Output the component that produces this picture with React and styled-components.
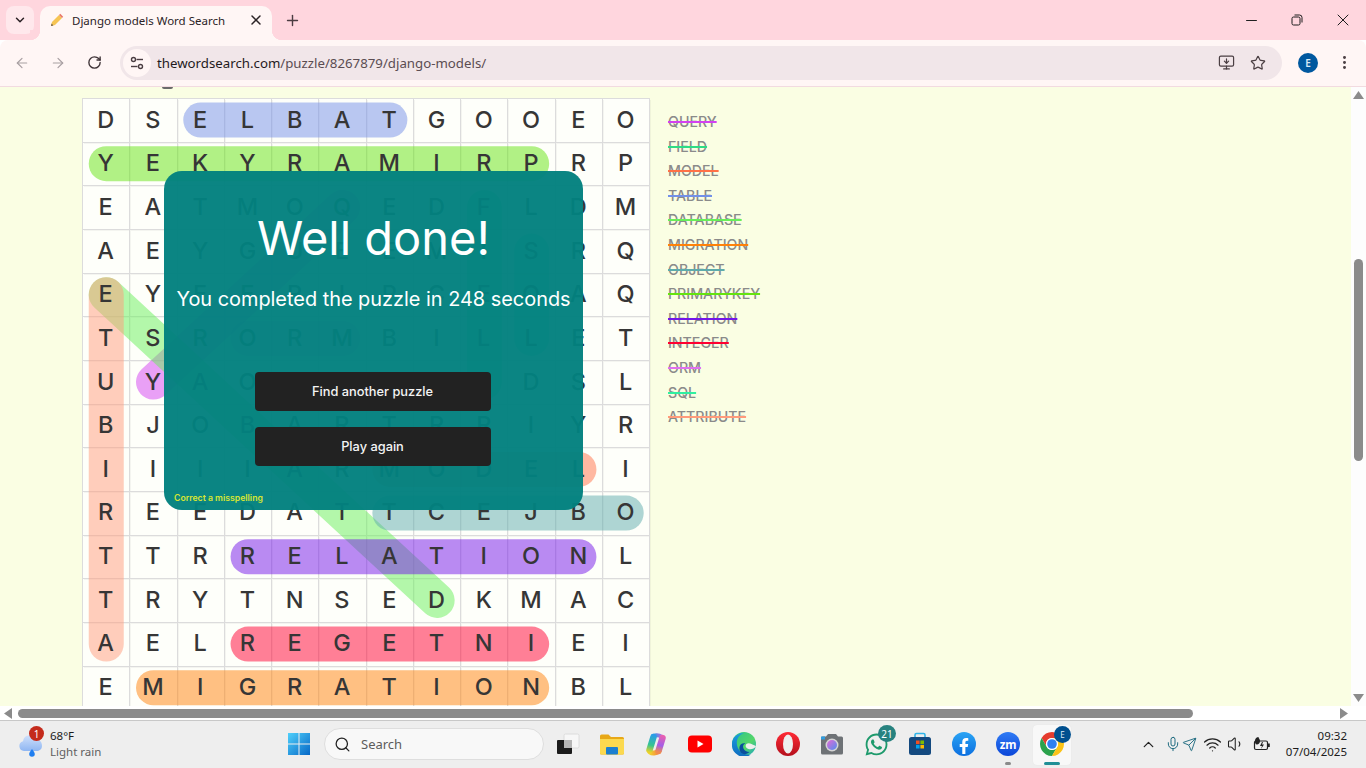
import React from 'react';
import styled, { createGlobalStyle } from 'styled-components';
import { ChevronDown, X, Plus, ArrowLeft, ArrowRight, RotateCw, MonitorDown, Star, EllipsisVertical, Minus, Search, ChevronUp, Mic, Send, Wifi, Volume1 } from 'lucide-react';
import { FaWhatsapp, FaFacebookF } from 'react-icons/fa';

const Global = createGlobalStyle`
  html, body { margin: 0; padding: 0; width: 1366px; height: 768px; overflow: hidden; background: #fff; }
  * { box-sizing: border-box; }
`;

const Screen = styled.div`
  width: 1366px; height: 768px; display: flex; flex-direction: column; overflow: hidden;
  font-family: "Noto Sans", "Open Sans", sans-serif;
`;

/* ---------- browser chrome ---------- */
const TabStrip = styled.div`
  height: 40px; background: #ffd6de; display: flex; align-items: flex-end; padding-left: 6px; flex: none;
`;
const TabListButton = styled.div`
  width: 28px; height: 28px; margin-bottom: 6px; border-radius: 8px; background: #ffe8ec;
  display: flex; align-items: center; justify-content: center; color: #2a2024;
`;
const Tab = styled.div`
  position: relative; width: 232px; height: 34px; margin-left: 6px; padding: 0 8px 6px 10px;
  background: #fff6f5; border-radius: 10px 10px 0 0; display: flex; align-items: center;
  color: #2b2326; font-size: 11.5px;
  &::before, &::after { content: ""; position: absolute; bottom: 0; width: 10px; height: 10px; }
  &::before { left: -10px; background: radial-gradient(circle at 0 0, #ffd6de 10px, #fff6f5 10.5px); }
  &::after { right: -10px; background: radial-gradient(circle at 100% 0, #ffd6de 10px, #fff6f5 10.5px); }
`;
const TabTitle = styled.span` margin-left: 8px; flex: 1; white-space: nowrap; `;
const NewTab = styled.div`
  margin: 0 0 9px 9px; width: 22px; height: 22px; display: flex; align-items: center; justify-content: center; color: #4b3d42;
`;
const WindowControls = styled.div`
  margin-left: auto; align-self: stretch; display: flex; align-items: center;
`;
const WindowButton = styled.div`
  width: 46px; height: 40px; display: flex; align-items: center; justify-content: center; color: #1d1d1d;
`;
const Toolbar = styled.div`
  height: 47px; flex: none; background: #fff6f5; border-bottom: 1px solid #f2dbe0; display: flex; align-items: center;
  padding: 0 0 1px 0; border-radius: 8px 8px 0 0; margin-top: 0;
`;
const NavGroup = styled.div` display: flex; align-items: center; padding-left: 4px; width: 120px; `;
const NavButton = styled.div`
  width: 36px; height: 36px; display: flex; align-items: center; justify-content: center;
  color: ${p => p.$dim ? '#a89fa2' : '#3f3438'};
`;
const Omnibox = styled.div`
  width: 1162px; height: 34px; border-radius: 17px; background: #f1e6e9; display: flex; align-items: center; padding: 0 8px 0 3px;
`;
const SiteInfo = styled.div`
  width: 28px; height: 28px; border-radius: 50%; background: #fff6f5; display: flex; align-items: center; justify-content: center;
`;
const Url = styled.div`
  margin-left: 6px; font-size: 13.25px; color: #1f1a1c; flex: 1; white-space: nowrap;
  span { color: #5b4d52; }
`;
const OmniIcon = styled.div`
  width: 32px; height: 32px; display: flex; align-items: center; justify-content: center; color: #4b3f43;
`;
const Avatar = styled.div`
  margin-left: 16px; width: 20px; height: 20px; border-radius: 50%; background: #00589f; color: #d9e9f7;
  display: flex; align-items: center; justify-content: center; font-size: 10px; font-weight: 600;
`;
const Kebab = styled.div`
  margin-left: 14px; width: 24px; display: flex; justify-content: center; color: #4b3f43;
`;

/* ---------- page ---------- */
const Viewport = styled.div` flex: none; height: 619px; display: flex; `;
const Page = styled.div`
  position: relative; flex: 1; overflow: hidden; background: #fafee3; display: flex; align-items: flex-start;
  padding: 11px 0 0 82px;
`;
const Descender = styled.i`
  position: absolute; left: 162px; top: 0; width: 11px; height: 2px; background: #6a6a6a; border-radius: 0 0 6px 6px;
`;
const Board = styled.div`
  position: relative; flex: none; width: 568px; height: 613px;
  display: grid; grid-template-columns: repeat(12, 47.27px); grid-auto-rows: 43.67px;
  border-top: 1px solid #dcdcdc; border-left: 1px solid #dcdcdc; background: #fefffa;
`;
const Cell = styled.div`
  border-right: 1px solid #dcdcdc; border-bottom: 1px solid #dcdcdc; box-shadow: 1px 1px 0 rgba(0, 0, 0, 0.04);
  display: flex; align-items: center; justify-content: center; padding: 0 1px 2px 0;
`;
const Letter = styled.span`
  position: relative; z-index: 2; font-family: Inter, "Noto Sans", sans-serif; font-size: 23.5px; font-weight: 550; color: #363636; line-height: 1;
`;
const Highlights = styled.svg`
  position: absolute; left: -1px; top: -1px; z-index: 1; pointer-events: none;
`;
const Modal = styled.div`
  position: absolute; z-index: 3; left: 81px; top: 72px; width: 419px; height: 339px; border-radius: 18px;
  background: rgba(2, 129, 126, 0.965); color: #fff; display: flex; flex-direction: column; align-items: center;
  font-family: Inter, "Noto Sans", sans-serif; padding: 37px 0 0;
`;
const ModalTitle = styled.h1`
  margin: 0; font-size: 47px; line-height: 60px; font-weight: 400; letter-spacing: 0;
`;
const ModalText = styled.p`
  margin: 18px 0 0; font-size: 19.9px; line-height: 26px; font-weight: 400; white-space: nowrap;
`;
const ModalButton = styled.div`
  width: 236px; height: 39px; border-radius: 4px; background: #222; color: #f4f4f4; margin-right: 2px;
  display: flex; align-items: center; justify-content: center; font-size: 12.8px; font-weight: 500;
  margin-top: ${p => p.$first ? '60px' : '16px'}; padding-bottom: 1px;
`;
const Correction = styled.div`
  align-self: flex-start; margin: auto 0 5px 10px; font-size: 8.7px; font-weight: 600; color: #d7e632; line-height: 13px;
`;
const WordList = styled.ul`
  list-style: none; margin: 0 0 0 18px; padding: 12px 0 0; font-family: Inter, "Noto Sans", sans-serif;
`;
const Word = styled.li`
  font-size: 14.2px; line-height: 24.6px; font-weight: 550; color: #8a8a8a;
  text-decoration: line-through 2px ${p => p.$color};
`;
const VScroll = styled.div`
  width: 15px; flex: none; background: #fdfdfd; display: flex; flex-direction: column; align-items: center;
  padding: 4px 0; color: #8b8b8b;
`;
const VThumb = styled.div`
  width: 9px; height: 202px; background: #8b8b8b; border-radius: 5px; margin: 160px 0 auto;
`;
const HScroll = styled.div`
  flex: none; height: 14px; background: #fff; display: flex; align-items: center; padding: 0 18px 0 4px;
`;
const HThumb = styled.div`
  width: 1175px; height: 9px; background: #8b8b8b; border-radius: 5px; margin: 0 auto 0 6px;
`;
const Arrow = styled.svg` flex: none; display: block; `;

/* ---------- taskbar ---------- */
const Taskbar = styled.div`
  flex: none; height: 48px; background: #eeeeee; border-top: 1px solid #c8c8c8; display: flex; align-items: center;
  position: relative; padding-bottom: 1px;
`;
const Weather = styled.div`
  width: 277px; padding-left: 18px; display: flex; align-items: center; flex: none;
`;
const WeatherIcon = styled.div` position: relative; width: 32px; height: 32px; `;
const RedBadge = styled.div`
  position: absolute; left: 11px; top: -2px; width: 15px; height: 15px; border-radius: 50%; background: #c42b1c; color: #fff;
  font-size: 10px; display: flex; align-items: center; justify-content: center;
`;
const WeatherText = styled.div`
  font-size: 11.5px; line-height: 16px; color: #1c1c1c; span { display: block; color: #5f5f5f; }
`;
const Slot = styled.div`
  position: relative; width: 44px; height: 40px; flex: none; display: flex; align-items: center; justify-content: center;
`;
const ActiveSlot = styled(Slot)`
  &::before { content: ""; position: absolute; left: 3px; right: 3px; top: 1px; bottom: -1px; background: #f8f8f8; border-radius: 4px; box-shadow: 0 0 1px #ddd; }
  svg { position: relative; }
`;
const SearchBox = styled.div`
  flex: none; width: 220px; height: 32px; margin: 0 2px 0 3px; border-radius: 16px; background: #f8f8f8; border: 1px solid #dedede;
  display: flex; align-items: center; padding-left: 9px; font-size: 13px; color: #5c5c5c; gap: 10px;
`;
const CountBadge = styled.div`
  position: absolute; left: 24px; top: 1px; width: 18px; height: 17px; border-radius: 50%; background: #27827f; color: #fff;
  font-size: 10px; display: flex; align-items: center; justify-content: center;
`;
const UserBadge = styled.div`
  position: absolute; left: 24px; top: 2px; width: 17px; height: 17px; border-radius: 50%; background: #00508f; color: #dce9f5;
  font-size: 8px; display: flex; align-items: center; justify-content: center;
`;
const RunDot = styled.i`
  position: absolute; bottom: -1px; left: 50%; margin-left: ${p => p.$wide ? '-8px' : '-3px'}; width: ${p => p.$wide ? '16px' : '6px'}; height: 3px;
  border-radius: 2px; background: ${p => p.$wide ? '#1f8f96' : '#8a8a8a'};
`;
const ZoomLogo = styled.div`
  width: 24px; height: 24px; border-radius: 50%; background: linear-gradient(180deg, #2f7bf5, #0b46d8);
  color: #fff; font-size: 11.5px; font-weight: 700; display: flex; align-items: center; justify-content: center; letter-spacing: -0.3px;
`;
const FacebookLogo = styled.div`
  width: 24px; height: 24px; border-radius: 50%; background: linear-gradient(180deg, #2aa4f4, #0c6fe0);
  color: #fff; display: flex; align-items: flex-end; justify-content: center; font-size: 16px; padding-bottom: 2px;
`;
const Tray = styled.div`
  margin-left: auto; display: flex; align-items: center; color: #222; padding-right: 19px;
`;
const TrayIcon = styled.div`
  width: ${p => p.$w || 24}px; display: flex; align-items: center; justify-content: center; gap: ${p => p.$gap || 0}px;
  color: ${p => p.$color || '#222'};
`;
const Clock = styled.div`
  margin-left: 9px; text-align: right; font-size: 11.5px; line-height: 16px; color: #1c1c1c;
`;

/* ---------- data ---------- */
const ROWS = [
  'DSELBATGOOEO', 'YEKYRAMIRPRP', 'EATMOQEDFLDM', 'AEYGUEEMISRQ', 'EYEERIPCEQAQ',
  'TSRORMBILLET', 'UYAORMTNDDSL', 'BJOBARTRRIYR', 'IIIIARMODELI', 'REEDATTCEJBO',
  'TTRRELATIONL', 'TRYTNSEDKMAC', 'AELREGETNIEI', 'EMIGRATIONBL',
];
const W = 47.27, H = 43.67;
const WORDS = [
  ['QUERY', '#d341f1', [6, 1, 2, 5]],
  ['FIELD', '#2fdc85', [2, 8, 6, 8]],
  ['MODEL', '#ff7147', [8, 6, 8, 10]],
  ['TABLE', '#7390e8', [0, 6, 0, 2]],
  ['DATABASE', '#67ef59', [11, 7, 4, 0]],
  ['MIGRATION', '#ff8109', [13, 1, 13, 9]],
  ['OBJECT', '#5dabab', [9, 11, 9, 6]],
  ['PRIMARYKEY', '#64e40f', [1, 9, 1, 0]],
  ['RELATION', '#7315e9', [10, 3, 10, 10]],
  ['INTEGER', '#ff0031', [12, 9, 12, 3]],
  ['ORM', '#e070f0', [5, 3, 5, 5]],
  ['SQL', '#30f0a0', [3, 9, 5, 9]],
  ['ATTRIBUTE', '#ff9b7b', [12, 0, 4, 0]],
];
const cx = c => 0.6 + (c + 0.5) * W;
const cy = r => 0.2 + (r + 0.5) * H;

/* ---------- drawings ---------- */
const Pencil = () => (
  <svg width="14" height="14" viewBox="0 0 14 14">
    <path d="M1 13l1-4 7-7 3 3-7 7z" fill="#f6c453" />
    <path d="M9 2l1.300-1.200 2.900 2.900L12 5z" fill="#e8786a" />
    <path d="M1 13l.6-2.400 1.800 1.800z" fill="#6b5a4a" />
  </svg>
);
const Tune = () => (
  <svg width="16" height="16" viewBox="0 0 16 16" fill="none" stroke="#4b3f43" strokeWidth="1.400">
    <circle cx="4.500" cy="4.500" r="2" /><path d="M7.500 4.500H14" />
    <circle cx="11.500" cy="11.500" r="2" /><path d="M2 11.500h6.500" />
  </svg>
);
const RestoreIcon = () => (
  <svg width="12" height="12" viewBox="0 0 12 12" fill="none" stroke="#1d1d1d" strokeWidth="1">
    <rect x="1" y="3" width="8" height="8" rx="1.500" /><path d="M3.500 1h5A2.500 2.500 0 0 1 11 3.500v5" />
  </svg>
);
const TriUp = () => <Arrow width="11" height="8" viewBox="0 0 11 8"><path d="M5.500 0L11 8H0z" fill="currentColor" /></Arrow>;
const TriDown = () => <Arrow width="11" height="8" viewBox="0 0 11 8"><path d="M5.500 8L11 0H0z" fill="currentColor" /></Arrow>;
const TriLeft = () => <Arrow width="8" height="11" viewBox="0 0 8 11"><path d="M0 5.500L8 0v11z" fill="#8b8b8b" /></Arrow>;
const TriRight = () => <Arrow width="8" height="11" viewBox="0 0 8 11"><path d="M8 5.500L0 0v11z" fill="#8b8b8b" /></Arrow>;
const Cloud = () => (
  <svg width="26" height="28" viewBox="0 0 26 28" style={{ position: 'absolute', left: 0, top: 2 }}>
    <defs><linearGradient id="cl" x1="0" y1="0" x2="0" y2="1"><stop offset="0" stopColor="#cfe0fb" /><stop offset="1" stopColor="#8fb6f2" /></linearGradient></defs>
    <path d="M6 21a5 5 0 0 1-1-9.800 7 7 0 0 1 13.400-1.500A5.800 5.800 0 0 1 20 21z" fill="url(#cl)" />
    <path d="M14 19c1.500 2 2.800 3.600 2.800 5a2.800 2.800 0 0 1-5.600 0c0-1.400 1.300-3 2.800-5z" fill="#1f7ef0" />
  </svg>
);
const WinLogo = () => (
  <svg width="24" height="24" viewBox="0 0 24 24">
    <defs><linearGradient id="wl" x1="0" y1="0" x2="1" y2="1"><stop offset="0" stopColor="#4fd0fb" /><stop offset="1" stopColor="#0667c6" /></linearGradient></defs>
    <path d="M1 1h10.500v10.500H1zM12.500 1H23v10.500H12.500zM1 12.500h10.500V23H1zM12.500 12.500H23V23H12.500z" fill="url(#wl)" />
  </svg>
);
const TaskView = () => (
  <svg width="26" height="26" viewBox="0 0 26 26">
    <rect x="9" y="3" width="15" height="14" rx="1.500" fill="#f7f7f7" stroke="#dcdcdc" />
    <rect x="2" y="9" width="15" height="14" rx="1" fill="#1b1b1b" />
    <rect x="9" y="9" width="8" height="8" fill="#b5b5b5" />
  </svg>
);
const Folder = () => (
  <svg width="24" height="22" viewBox="0 0 24 22">
    <path d="M0 3a1.500 1.500 0 0 1 1.500-1.500h7L11 4h11.500A1.500 1.500 0 0 1 24 5.500V20a1.500 1.500 0 0 1-1.500 1.500h-21A1.500 1.500 0 0 1 0 20z" fill="#e8a817" />
    <path d="M0 6h24v14a1.500 1.500 0 0 1-1.500 1.500h-21A1.500 1.500 0 0 1 0 20z" fill="#fbd94f" />
    <rect x="6" y="14" width="12" height="7.500" rx="1" fill="#1b7fd0" />
  </svg>
);
const Copilot = () => (
  <svg width="24" height="24" viewBox="0 0 24 24" fill="none" strokeLinecap="round">
    <defs>
      <linearGradient id="c1" gradientUnits="userSpaceOnUse" x1="9" y1="3" x2="5" y2="20"><stop offset="0" stopColor="#2a9de8" /><stop offset=".6" stopColor="#36c48f" /><stop offset="1" stopColor="#e8d02a" /></linearGradient>
      <linearGradient id="c2" gradientUnits="userSpaceOnUse" x1="19" y1="4" x2="15" y2="20"><stop offset="0" stopColor="#e85fb0" /><stop offset=".6" stopColor="#a35de8" /><stop offset="1" stopColor="#f08a50" /></linearGradient>
      <linearGradient id="c3" gradientUnits="userSpaceOnUse" x1="5" y1="20" x2="15" y2="20"><stop offset="0" stopColor="#f2d62c" /><stop offset="1" stopColor="#f5853f" /></linearGradient>
      <linearGradient id="c4" gradientUnits="userSpaceOnUse" x1="9" y1="4" x2="19" y2="4"><stop offset="0" stopColor="#2a9de8" /><stop offset="1" stopColor="#c865dc" /></linearGradient>
    </defs>
    <path d="M6 20C8 21.500 12 21.500 15 19" stroke="url(#c3)" strokeWidth="5" />
    <path d="M9 4C12 3 15 3 18 5" stroke="url(#c4)" strokeWidth="4" />
    <path d="M9.500 5L5.500 18" stroke="url(#c1)" strokeWidth="6.500" />
    <path d="M14.500 19L18.500 6" stroke="url(#c2)" strokeWidth="6.500" />
  </svg>
);
const YouTube = () => (
  <svg width="24" height="18" viewBox="0 0 24 18">
    <rect width="24" height="17" y=".5" rx="4" fill="#f00" /><path d="M9.500 5.500v7l6-3.500z" fill="#fff" />
  </svg>
);
const Edge = () => (
  <svg width="24" height="24" viewBox="0 0 24 24">
    <defs>
      <linearGradient id="e1" x1="0" y1="0" x2="1" y2="1"><stop offset="0" stopColor="#2bc48a" /><stop offset=".6" stopColor="#54d66a" /><stop offset="1" stopColor="#1aa3c8" /></linearGradient>
      <linearGradient id="e2" x1="0" y1="0" x2="0" y2="1"><stop offset="0" stopColor="#1a9ce0" /><stop offset="1" stopColor="#0f6cc0" /></linearGradient>
    </defs>
    <circle cx="12" cy="12" r="12" fill="url(#e1)" />
    <path d="M0 12C0 5 6 1 12 1c-5 2-8 6-7 12 1 6 7 11 14 9.500A12 12 0 0 1 0 12z" fill="url(#e2)" />
    <path d="M24 14.500c-1.500 2-5 3.500-7.500 2.500-3-1-3.500-3.500-2-5 1-1 3-1.200 5 0 2 1 4 1.500 4.500 2.500z" fill="#eeeeee" />
    <path d="M11.500 22c-3-1-4.500-4-4-7 .4-2.500 3-4.500 6-3.500-2.500.5-3 3-2 5 1 2 3 3.500 6 3.500-1.500 1.500-4 2.500-6 2z" fill="#0a4f9e" />
  </svg>
);
const Opera = () => (
  <svg width="24" height="24" viewBox="0 0 24 24">
    <defs><linearGradient id="op" x1="0" y1="0" x2="0" y2="1"><stop offset="0" stopColor="#ff2a35" /><stop offset="1" stopColor="#b40f1c" /></linearGradient></defs>
    <circle cx="12" cy="12" r="12" fill="url(#op)" />
    <ellipse cx="12" cy="12" rx="5" ry="9.500" fill="#eeeeee" />
  </svg>
);
const Camera = () => (
  <svg width="24" height="22" viewBox="0 0 24 22">
    <defs><linearGradient id="ca" x1="0" y1="0" x2="1" y2="1"><stop offset="0" stopColor="#e66ad6" /><stop offset="1" stopColor="#4f8ef0" /></linearGradient></defs>
    <path d="M1 5a1.500 1.500 0 0 1 1.500-1.500H6L8 1h8l2 2.500h3.500A1.500 1.500 0 0 1 23 5v15a1.500 1.500 0 0 1-1.500 1.500h-19A1.500 1.500 0 0 1 1 20z" fill="#6e7276" />
    <rect x="1" y="3.500" width="4" height="3" fill="#2f9de0" />
    <circle cx="12" cy="12" r="6.500" fill="#d5d5d5" /><circle cx="12" cy="12" r="5" fill="url(#ca)" />
  </svg>
);
const Store = () => (
  <svg width="24" height="24" viewBox="0 0 24 24">
    <path d="M7 6V3a1.500 1.500 0 0 1 1.500-1.500h7A1.500 1.500 0 0 1 17 3v3" fill="none" stroke="#30b4e8" strokeWidth="1.600" />
    <rect x="1" y="5" width="22" height="18" rx="2.500" fill="#14497f" />
    <rect x="8" y="8.500" width="3.600" height="3.600" fill="#f25022" /><rect x="12.400" y="8.500" width="3.600" height="3.600" fill="#7fba00" />
    <rect x="8" y="12.900" width="3.600" height="3.600" fill="#00a4ef" /><rect x="12.400" y="12.900" width="3.600" height="3.600" fill="#ffb900" />
  </svg>
);
const ChromeLogo = () => (
  <svg width="24" height="24" viewBox="2 2 20 20">
    <path d="M3.340 7A10 10 0 0 1 20.660 7H12A5 5 0 0 0 7.670 14.500z" fill="#e53c2e" />
    <path d="M3.340 7A10 10 0 0 0 12 22L16.330 14.500A5 5 0 0 1 7.670 14.500z" fill="#2ba24c" />
    <path d="M20.660 7A10 10 0 0 1 12 22L16.330 14.500A5 5 0 0 0 12 7z" fill="#fbc318" />
    <circle cx="12" cy="12" r="5" fill="#fff" /><circle cx="12" cy="12" r="4" fill="#2f7ff0" />
  </svg>
);
const Battery = () => (
  <svg width="20" height="16" viewBox="0 0 20 16">
    <rect x="2.500" y="5" width="13" height="8.500" rx="1.500" fill="none" stroke="#222" strokeWidth="1.200" />
    <rect x="16" y="7.500" width="1.800" height="3.500" fill="#222" />
    <path d="M3 4c.5-2 2-3 3.500-3 0 1.500 1.500 2 1.500 4 0 2-1.500 3.500-3 3.500S2.500 6.500 3 4z" fill="#222" />
    <path d="M10 6l-2 4h2l-1 3 3-4.500h-2l1-2.500z" fill="#222" />
  </svg>
);

export default function App() {
  return (
    <Screen>
      <Global />
      <TabStrip>
        <TabListButton><ChevronDown size={14} strokeWidth={2.500} /></TabListButton>
        <Tab>
          <Pencil />
          <TabTitle>Django models Word Search</TabTitle>
          <X size={16} strokeWidth={2.200} />
        </Tab>
        <NewTab><Plus size={17} strokeWidth={2} /></NewTab>
        <WindowControls>
          <WindowButton><Minus size={17} strokeWidth={1.400} /></WindowButton>
          <WindowButton><RestoreIcon /></WindowButton>
          <WindowButton><X size={20} strokeWidth={1.200} /></WindowButton>
        </WindowControls>
      </TabStrip>
      <Toolbar>
        <NavGroup>
          <NavButton $dim><ArrowLeft size={16} strokeWidth={1.800} /></NavButton>
          <NavButton $dim><ArrowRight size={16} strokeWidth={1.800} /></NavButton>
          <NavButton><RotateCw size={15} strokeWidth={2.200} /></NavButton>
        </NavGroup>
        <Omnibox>
          <SiteInfo><Tune /></SiteInfo>
          <Url>thewordsearch.com<span>/puzzle/8267879/django-models/</span></Url>
          <OmniIcon><MonitorDown size={17} strokeWidth={1.700} /></OmniIcon>
          <OmniIcon><Star size={16} strokeWidth={1.800} /></OmniIcon>
        </Omnibox>
        <Avatar>E</Avatar>
        <Kebab><EllipsisVertical size={17} strokeWidth={2.200} /></Kebab>
      </Toolbar>

      <Viewport>
        <Page>
          <Descender />
          <Board>
            {ROWS.map((row, r) => row.split('').map((ch, c) => (
              <Cell key={`${r}-${c}`}><Letter>{ch}</Letter></Cell>
            )))}
            <Highlights width="570" height="615" viewBox="0 0 570 615">
              {WORDS.map(([name, color, [r1, c1, r2, c2]]) => (
                <line key={name} x1={cx(c1)} y1={cy(r1)} x2={cx(c2)} y2={cy(r2)} stroke={color} strokeOpacity="0.5" strokeWidth="35" strokeLinecap="round" />
              ))}
            </Highlights>
            <Modal>
              <ModalTitle>Well done!</ModalTitle>
              <ModalText>You completed the puzzle in 248 seconds</ModalText>
              <ModalButton $first>Find another puzzle</ModalButton>
              <ModalButton>Play again</ModalButton>
              <Correction>Correct a misspelling</Correction>
            </Modal>
          </Board>
          <WordList>
            {WORDS.map(([name, strike]) => <Word key={name} $color={strike}>{name}</Word>)}
          </WordList>
        </Page>
        <VScroll>
          <TriUp />
          <VThumb />
          <TriDown />
        </VScroll>
      </Viewport>
      <HScroll>
        <TriLeft />
        <HThumb />
        <TriRight />
      </HScroll>

      <Taskbar>
        <Weather>
          <WeatherIcon><Cloud /><RedBadge>1</RedBadge></WeatherIcon>
          <WeatherText>68°F<span>Light rain</span></WeatherText>
        </Weather>
        <Slot><WinLogo /></Slot>
        <SearchBox><Search size={17} color="#222" strokeWidth={1.800} />Search</SearchBox>
        <Slot><TaskView /></Slot>
        <Slot><Folder /></Slot>
        <Slot><Copilot /></Slot>
        <Slot><YouTube /></Slot>
        <Slot><Edge /></Slot>
        <Slot><Opera /></Slot>
        <Slot><Camera /></Slot>
        <Slot><FaWhatsapp size={25} color="#1d9a6c" /><CountBadge>21</CountBadge></Slot>
        <Slot><Store /></Slot>
        <Slot><FacebookLogo><FaFacebookF /></FacebookLogo></Slot>
        <Slot><ZoomLogo>zm</ZoomLogo><RunDot /></Slot>
        <ActiveSlot><ChromeLogo /><UserBadge>E</UserBadge><RunDot $wide /></ActiveSlot>
        <Tray>
          <TrayIcon $w={24}><ChevronUp size={17} strokeWidth={1.800} /></TrayIcon>
          <TrayIcon $w={40} $gap={1} $color="#1f6b80"><Mic size={16} strokeWidth={1.500} /><Send size={15} strokeWidth={1.500} /></TrayIcon>
          <TrayIcon $w={24}><Wifi size={19} strokeWidth={1.600} /></TrayIcon>
          <TrayIcon $w={22}><Volume1 size={18} strokeWidth={1.400} /></TrayIcon>
          <TrayIcon $w={30}><Battery /></TrayIcon>
          <Clock>09:32<br />07/04/2025</Clock>
        </Tray>
      </Taskbar>
    </Screen>
  );
}
